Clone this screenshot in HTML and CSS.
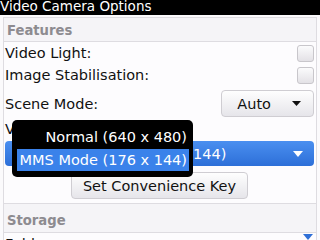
FILE: index.html
```html
<!DOCTYPE html>
<html>
<head>
<meta charset="utf-8">
<link rel="stylesheet" href="styles.css">
</head>
<body>
<div class="screen">
  <div class="titlebar">Video Camera Options</div>
  <div class="content">
    <div class="section">
      <div class="section-header">Features</div>
      <div class="row row-check">
        <span class="label">Video Light:</span>
        <span class="checkbox"></span>
      </div>
      <div class="row row-check">
        <span class="label">Image Stabilisation:</span>
        <span class="checkbox"></span>
      </div>
      <div class="row row-choice">
        <span class="label">Scene Mode:</span>
        <span class="choice">
          <span class="choice-text">Auto</span>
          <svg class="arrow" width="9" height="5" viewBox="0 0 9 5"><path d="M0 0H9L4.5 5Z" fill="#111"/></svg>
        </span>
      </div>
      <div class="row row-label">
        <span class="label">Video Format:</span>
      </div>
      <div class="row row-wide">
        <span class="wide-choice">
          <span class="wide-text">MMS Mode (176 x 144)</span>
          <svg class="arrow" width="10" height="6" viewBox="0 0 10 6"><path d="M0 0H10L5 6Z" fill="#fff"/></svg>
        </span>
      </div>
      <div class="row row-button">
        <span class="button">Set Convenience Key</span>
      </div>
    </div>
    <div class="section">
      <div class="section-header section-header-low">Storage</div>
      <div class="row row-check">
        <span class="label">Folder:</span>
      </div>
    </div>
  </div>
  <div class="popup">
    <div class="popup-item">Normal (640 x 480)</div>
    <div class="popup-item selected">MMS Mode (176 x 144)</div>
  </div>
  <svg class="scroll-arrow" width="10" height="6" viewBox="0 0 10 6"><path d="M0 0H10L5 6Z" fill="#2f6fd6"/></svg>
</div>
</body>
</html>
```

FILE: styles.css
```css
html, body {
  margin: 0;
  padding: 0;
}
body {
  width: 320px;
  height: 240px;
  overflow: hidden;
  background: #fbfafc;
  font-family: "DejaVu Sans", sans-serif;
  font-size: 14.5px;
  color: #111;
}
.screen {
  position: relative;
  width: 320px;
  height: 240px;
  overflow: hidden;
}
.titlebar {
  height: 15px;
  background: #000;
  color: #fff;
  font-size: 13.5px;
  line-height: 12px;
  white-space: nowrap;
  overflow: hidden;
}
.content {
  padding: 2px 3px 0 3px;
}
.section {
  border: 1px solid #dedce1;
  border-bottom: none;
  background: #fdfcfe;
}
.section-header {
  height: 23px;
  border-bottom: 1px solid #dedce1;
  background: #f5f4f7;
  color: #8d8b90;
  font-weight: bold;
  font-size: 13.2px;
  line-height: 25px;
  padding-left: 3px;
}
.section-header-low {
  height: 28px;
  line-height: 34px;
}
.row {
  display: flex;
  align-items: center;
  padding: 0 2px 0 1px;
}
.label {
  flex: 1;
  white-space: nowrap;
}
.row-check {
  height: 22px;
}
.checkbox {
  width: 15px;
  height: 15px;
  border: 1px solid #c8c6cb;
  border-radius: 3px;
  background: linear-gradient(#fbfbfc, #e3e1e6);
}
.row-choice {
  height: 35px;
}
.choice {
  width: 91px;
  height: 25px;
  border: 1px solid #cfcdd2;
  border-radius: 4px;
  background: linear-gradient(#fefefe, #e6e5ea);
  display: flex;
  align-items: center;
  justify-content: flex-end;
}
.choice-text {
  margin-right: 21px;
}
.choice .arrow {
  margin-right: 12px;
}
.row-label {
  height: 20px;
  align-items: flex-start;
}
.row-wide {
  height: 28px;
  align-items: flex-start;
}
.wide-choice {
  flex: 1;
  height: 25px;
  border-radius: 4px;
  background: linear-gradient(#4a8ff0, #2d6fd8);
  color: #fff;
  display: flex;
  align-items: center;
  padding-left: 54px;
}
.wide-text {
  flex: 1;
}
.wide-choice .arrow {
  margin-right: 11px;
}
.row-button {
  height: 34px;
  box-sizing: border-box;
  justify-content: center;
  align-items: flex-start;
  padding-top: 3px;
}
.button {
  height: 25px;
  border: 1px solid #cfcdd2;
  border-radius: 4px;
  background: linear-gradient(#fefefe, #e6e5ea);
  padding: 0 11px;
  display: flex;
  align-items: center;
}
.popup {
  position: absolute;
  left: 12px;
  top: 120px;
  width: 181px;
  height: 57px;
  box-sizing: border-box;
  background: #000;
  border-radius: 5px;
  padding: 6px 4px 0 5px;
  color: #fff;
}
.popup-item {
  height: 22px;
  line-height: 22px;
  text-align: right;
  white-space: nowrap;
  padding-right: 2px;
}
.popup-item.selected {
  margin-top: 1px;
  background: #3a82ea;
}
.scroll-arrow {
  position: absolute;
  right: 7px;
  bottom: 0;
}
```
